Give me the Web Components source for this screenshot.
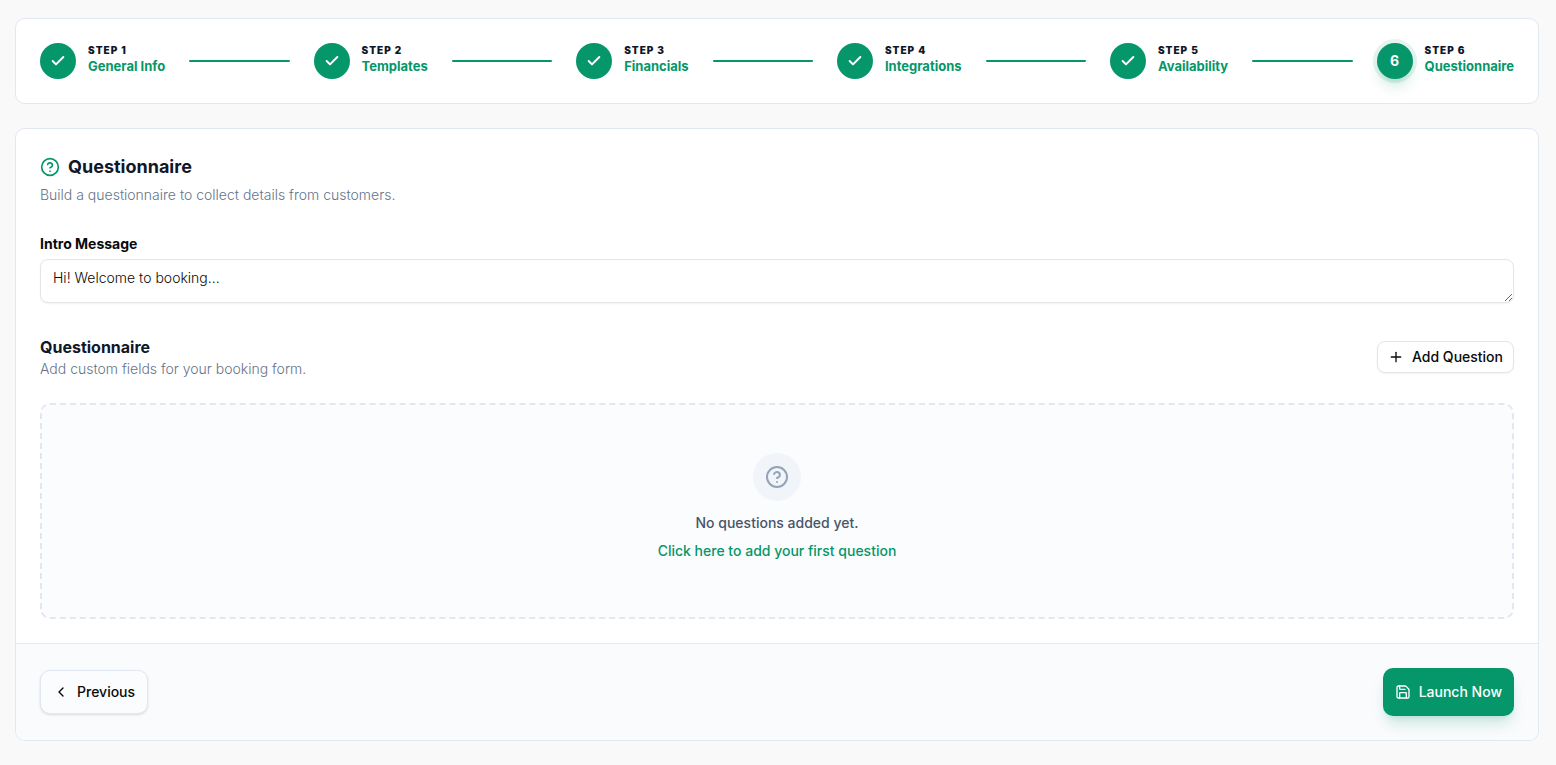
<!DOCTYPE html>
<html lang="en">
<head>
<meta charset="utf-8">
<meta name="viewport" content="width=device-width, initial-scale=1">
<title>Questionnaire</title>
<style>
:root {
  --font-sans: Inter, "Liberation Sans", sans-serif;
  --primary: #059669;
  --foreground: #0a0a0a;
  --heading: #0f172a;
  --muted-foreground: #64748b;
  --border: #e2e8f0;
  --input: #e5e5e5;
}
body {
  margin: 0;
  background: #f9f9f9;
  font-family: var(--font-sans);
  font-size: 14px;
  line-height: 20px;
  color: var(--foreground);
}
</style>
</head>
<body>
<booking-setup></booking-setup>

<script>
const ICONS = {
  check: '<path d="M20 6 9 17l-5-5"/>',
  help:
    '<circle cx="12" cy="12" r="10"/>' +
    '<path d="M9.09 9a3 3 0 0 1 5.83 1c0 2-3 3-3 3"/><path d="M12 17h.01"/>',
  plus: '<path d="M5 12h14"/><path d="M12 5v14"/>',
  "chevron-left": '<path d="m15 18-6-6 6-6"/>',
  save:
    '<path d="M15.2 3a2 2 0 0 1 1.4.6l3.8 3.8a2 2 0 0 1 .6 1.4V19a2 2 0 0 1-2 2H5a2 2 0 0 1-2-2V5a2 2 0 0 1 2-2z"/>' +
    '<path d="M17 21v-7a1 1 0 0 0-1-1H8a1 1 0 0 0-1 1v7"/><path d="M7 3v4a1 1 0 0 0 1 1h7"/>',
};

/**
 * ui-icon - Stroke icon, coloured by currentColor
 *
 * Attributes: name, size (px), stroke
 */
class UiIcon extends HTMLElement {
  constructor() {
    super();
    this.attachShadow({ mode: "open" });
  }

  connectedCallback() {
    const size = this.getAttribute("size") || "16";
    const stroke = this.getAttribute("stroke") || "2";
    this.shadowRoot.innerHTML =
      "<style>" + UiIcon._styles + "</style>" +
      '<svg width="' + size + '" height="' + size + '" viewBox="0 0 24 24" fill="none"' +
      ' stroke="currentColor" stroke-width="' + stroke + '" stroke-linecap="round"' +
      ' stroke-linejoin="round" aria-hidden="true">' +
      (ICONS[this.getAttribute("name")] || "") + "</svg>";
  }

  static _styles = `
:host { display: block; flex: none; }
svg { display: block; }
`;
}

/**
 * ui-button - Button with an icon slot and a text slot
 *
 * Attributes: variant ("outline" | "nav" | "primary" | "link")
 */
class UiButton extends HTMLElement {
  constructor() {
    super();
    this.attachShadow({ mode: "open" });
    this.shadowRoot.innerHTML =
      "<style>" + UiButton._styles + "</style>" +
      '<button type="button"><slot name="icon"></slot><slot></slot></button>';
  }

  static _styles = `
:host { display: inline-flex; flex: none; }
button {
  display: inline-flex;
  align-items: center;
  justify-content: center;
  gap: 8px;
  height: 32px;
  padding: 0 10px;
  border: 1px solid var(--input);
  border-radius: 8px;
  background: #fff;
  color: var(--foreground);
  font: 500 14px/20px var(--font-sans);
  white-space: nowrap;
  cursor: pointer;
  box-shadow: 0 1px 2px rgba(0, 0, 0, 0.05);
}
button:focus-visible { outline: 2px solid var(--primary); outline-offset: 2px; }
:host([variant="nav"]) button {
  height: 44px;
  padding: 0 12px;
  border-color: var(--border);
  border-radius: 10px;
  background: #fbfcfe;
  box-shadow: 0 1px 3px rgba(0, 0, 0, 0.1), 0 1px 2px -1px rgba(0, 0, 0, 0.1);
}
:host([variant="primary"]) button {
  height: 48px;
  padding: 0 12px;
  border: 0;
  border-radius: 10px;
  background: var(--primary);
  color: #fff;
  box-shadow: 0 10px 15px -3px rgba(5, 150, 105, 0.2), 0 4px 6px -4px rgba(5, 150, 105, 0.2);
}
:host([variant="link"]) button {
  height: 36px;
  padding: 0;
  border: 0;
  background: none;
  color: var(--primary);
  box-shadow: none;
}
`;
}

/**
 * ui-card - Bordered panel with an optional footer slot
 */
class UiCard extends HTMLElement {
  constructor() {
    super();
    this.attachShadow({ mode: "open" });
    this.shadowRoot.innerHTML =
      "<style>" + UiCard._styles + "</style>" +
      '<div class="body"><slot></slot></div><slot name="footer"></slot>';
  }

  static _styles = `
:host {
  display: block;
  background: #fff;
  border: 1px solid var(--border);
  border-radius: 10px;
  overflow: hidden;
}
.body { padding: 24px; }
::slotted([slot="footer"]) {
  display: flex;
  align-items: center;
  justify-content: space-between;
  padding: 24px;
  border-top: 1px solid var(--border);
  background: #fafbfd;
}
`;
}

/**
 * step-progress - Row of numbered steps joined by lines
 *
 * Properties:
 *   - steps (string[]): step titles
 *   - current (number): 1-based number of the active step
 */
class StepProgress extends HTMLElement {
  constructor() {
    super();
    this.attachShadow({ mode: "open" });
    this._steps = ["General Info", "Templates", "Financials", "Integrations", "Availability", "Questionnaire"];
    this._current = 6;
  }

  set steps(val) {
    this._steps = Array.isArray(val) ? val : [];
    this._render();
  }
  get steps() {
    return this._steps;
  }

  set current(val) {
    this._current = Number(val) || 1;
    this._render();
  }
  get current() {
    return this._current;
  }

  connectedCallback() {
    this._render();
  }

  _render() {
    let h = "<ol>";
    this._steps.forEach((title, i) => {
      const n = i + 1;
      const active = n === this._current;
      h += active ? '<li class="active" aria-current="step">' : "<li>";
      h += '<span class="dot">';
      h += n < this._current ? '<ui-icon name="check" stroke="3"></ui-icon>' : n;
      h += "</span>";
      h += '<span class="text"><span class="num">STEP ' + n + "</span>";
      h += '<span class="title">' + title + "</span></span></li>";
      if (n < this._steps.length) h += '<li class="line" role="presentation"></li>';
    });
    h += "</ol>";
    this.shadowRoot.innerHTML = "<style>" + StepProgress._styles + "</style>" + h;
  }

  static _styles = `
:host { display: block; }
ol {
  display: flex;
  align-items: center;
  gap: 24px;
  margin: 0;
  padding: 0;
  list-style: none;
}
li { display: flex; align-items: flex-start; gap: 12px; }
.line {
  flex: 1;
  height: 2px;
  border-radius: 1px;
  background: var(--primary);
}
.dot {
  display: flex;
  align-items: center;
  justify-content: center;
  width: 36px;
  height: 36px;
  border-radius: 50%;
  background: var(--primary);
  color: #fff;
  font-size: 14px;
  font-weight: 700;
}
.active .dot {
  box-shadow: 0 0 0 4px rgba(5, 150, 105, 0.1), 0 10px 15px -3px rgba(5, 150, 105, 0.2),
    0 4px 6px -4px rgba(5, 150, 105, 0.2);
}
.text { display: flex; flex-direction: column; white-space: nowrap; }
.num {
  font-size: 10px;
  line-height: 14px;
  font-weight: 900;
  letter-spacing: 1px;
  color: var(--heading);
}
.title {
  font-size: 13px;
  line-height: 18px;
  font-weight: 700;
  color: var(--primary);
}
`;
}

/**
 * text-field - Label with a resizable text area
 *
 * Attributes: label, value
 */
class TextField extends HTMLElement {
  constructor() {
    super();
    this.attachShadow({ mode: "open" });
    this.shadowRoot.innerHTML =
      "<style>" + TextField._styles + "</style>" +
      '<label for="field"></label><textarea id="field" rows="1"></textarea>';
  }

  connectedCallback() {
    this.shadowRoot.querySelector("label").textContent = this.getAttribute("label");
    this.shadowRoot.querySelector("textarea").value = this.getAttribute("value") || "";
  }

  static _styles = `
:host { display: flex; flex-direction: column; gap: 4px; }
label { font-weight: 700; line-height: 22px; }
textarea {
  box-sizing: border-box;
  width: 100%;
  height: 44px;
  padding: 8px 12px;
  border: 1px solid var(--input);
  border-radius: 8px;
  background: #fff;
  color: var(--foreground);
  font: 300 14px/20px var(--font-sans);
  resize: vertical;
  box-shadow: 0 1px 2px rgba(0, 0, 0, 0.05);
}
`;
}

/**
 * empty-state - Dashed placeholder with an icon, a message and an action slot
 */
class EmptyState extends HTMLElement {
  constructor() {
    super();
    this.attachShadow({ mode: "open" });
    this.shadowRoot.innerHTML =
      "<style>" + EmptyState._styles + "</style>" +
      '<span class="badge"><ui-icon name="help" size="24"></ui-icon></span>' +
      '<p><slot></slot></p><slot name="action"></slot>';
  }

  static _styles = `
:host {
  display: flex;
  flex-direction: column;
  align-items: center;
  padding: 48px;
  border: 2px dashed var(--border);
  border-radius: 10px;
  background: #fbfcfe;
}
.badge {
  padding: 12px;
  border-radius: 50%;
  background: #f1f5f9;
  color: #94a3b8;
}
p {
  margin: 12px 0 0;
  font-weight: 500;
  color: #475569;
}
`;
}

/**
 * booking-setup - The whole page of the last setup step
 */
class BookingSetup extends HTMLElement {
  constructor() {
    super();
    this.attachShadow({ mode: "open" });
    this.shadowRoot.innerHTML = "<style>" + BookingSetup._styles + "</style>" + `
<ui-card><step-progress></step-progress></ui-card>
<ui-card>
  <header>
    <h2><ui-icon name="help" size="20"></ui-icon>Questionnaire</h2>
    <p>Build a questionnaire to collect details from customers.</p>
  </header>
  <text-field label="Intro Message" value="Hi! Welcome to booking..."></text-field>
  <section>
    <div>
      <h3>Questionnaire</h3>
      <p>Add custom fields for your booking form.</p>
    </div>
    <ui-button variant="outline"><ui-icon slot="icon" name="plus"></ui-icon>Add Question</ui-button>
  </section>
  <empty-state>
    No questions added yet.
    <ui-button slot="action" variant="link">Click here to add your first question</ui-button>
  </empty-state>
  <footer slot="footer">
    <ui-button variant="nav"><ui-icon slot="icon" name="chevron-left"></ui-icon>Previous</ui-button>
    <ui-button variant="primary"><ui-icon slot="icon" name="save"></ui-icon>Launch Now</ui-button>
  </footer>
</ui-card>`;
  }

  static _styles = `
:host {
  display: flex;
  flex-direction: column;
  gap: 24px;
  padding: 18px 17px 24px 15px;
}
h2, h3, p { margin: 0; }
h2 {
  display: flex;
  align-items: center;
  gap: 8px;
  margin-bottom: 4px;
  font-size: 18px;
  line-height: 28px;
  font-weight: 700;
  color: var(--heading);
}
h2 ui-icon { color: var(--primary); }
h3 {
  font-size: 16px;
  line-height: 24px;
  font-weight: 700;
  color: var(--heading);
}
p { font-weight: 300; color: var(--muted-foreground); }
header { margin-bottom: 28px; }
section {
  display: flex;
  align-items: center;
  justify-content: space-between;
  margin: 32px 0 24px;
}
`;
}

customElements.define("ui-icon", UiIcon);
customElements.define("ui-button", UiButton);
customElements.define("ui-card", UiCard);
customElements.define("step-progress", StepProgress);
customElements.define("text-field", TextField);
customElements.define("empty-state", EmptyState);
customElements.define("booking-setup", BookingSetup);
</script>
</body>
</html>
